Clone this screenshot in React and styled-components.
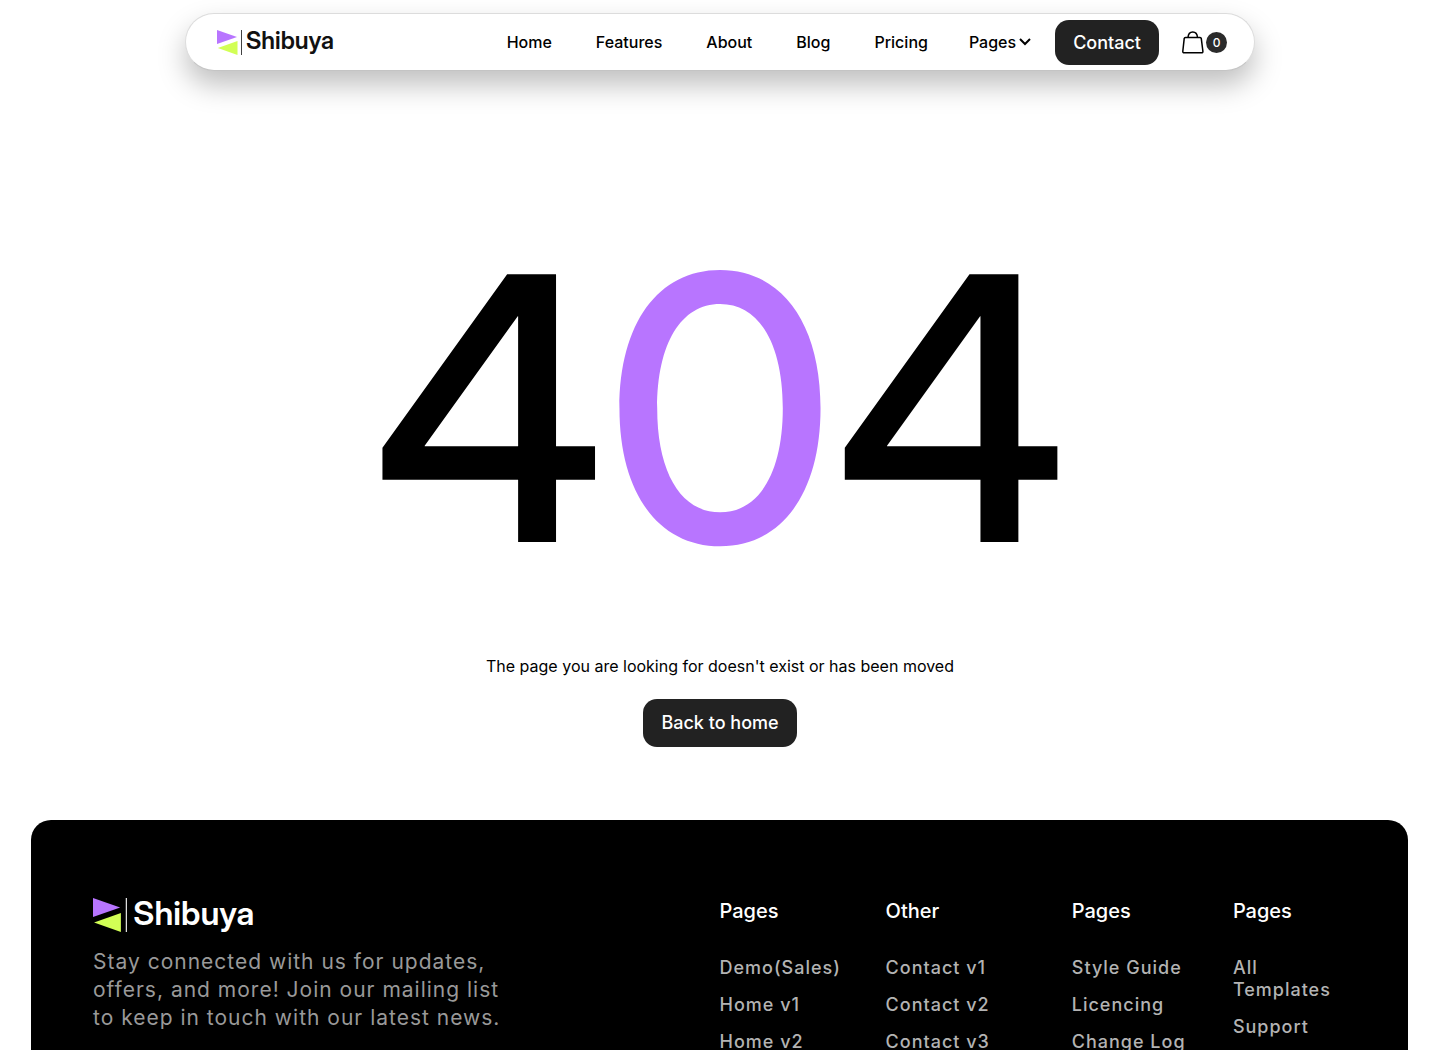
import React from "react";
import styled, { createGlobalStyle } from "styled-components";

const GlobalStyle = createGlobalStyle`
  * {
    box-sizing: border-box;
  }

  body {
    margin: 0;
    background: #fff;
    color: #000;
    font-family: Inter, "Liberation Sans", sans-serif;
    font-size: 16px;
    -webkit-font-smoothing: antialiased;
  }

  h1, h2, p, ul {
    margin: 0;
    padding: 0;
  }

  a {
    color: inherit;
    text-decoration: none;
  }
`;

const Header = styled.header`
  padding: 13px 24px 0;
`;

const Bar = styled.div`
  display: flex;
  align-items: center;
  justify-content: space-between;
  max-width: 1070px;
  height: 58px;
  margin: 0 auto;
  padding: 0 27px 0 31px;
  border: 1px solid #dcdcdc;
  border-bottom-color: #c4c4c4;
  border-radius: 29px;
  background: #fff;
  box-shadow: 0 14px 28px rgba(0, 0, 0, 0.25);
`;

const LogoLink = styled.a`
  display: flex;
  align-items: flex-start;
  width: fit-content;
  gap: ${({ $large }) => ($large ? "5px" : "3px")};
  color: ${({ $large }) => ($large ? "#fff" : "#111")};
  font-family: "Inter Display", Inter, sans-serif;
  font-size: ${({ $large }) => ($large ? "33px" : "24px")};
  line-height: ${({ $large }) => ($large ? "30px" : "22px")};
  font-weight: 600;

  svg {
    display: block;
    width: auto;
    height: ${({ $large }) => ($large ? "34px" : "25px")};
  }
`;

const Nav = styled.nav`
  display: flex;
  align-items: center;
`;

const Menu = styled.ul`
  display: flex;
  align-items: center;
  gap: 44px;
  margin-right: 41px;
  list-style: none;
  font-weight: 500;
  line-height: 20px;
`;

const MenuButton = styled.button`
  display: inline-flex;
  align-items: center;
  gap: 3px;
  margin-right: 24px;
  padding: 0;
  border: 0;
  background: none;
  color: inherit;
  font: inherit;
  font-weight: 500;
  line-height: 20px;
`;

const Button = styled.a`
  display: inline-block;
  padding: ${({ $compact }) => ($compact ? "11px 18px 10px" : "12px 18px")};
  border-radius: 14px;
  background: #222;
  color: #fff;
  font-size: 18px;
  font-weight: 500;
  line-height: 24px;
`;

const CartButton = styled.button`
  display: inline-flex;
  align-items: center;
  gap: 2px;
  margin-left: 22px;
  padding: 0;
  border: 0;
  background: none;
  color: #000;
  font: inherit;
`;

const CartCount = styled.span`
  width: 21px;
  height: 21px;
  border-radius: 50%;
  background: #2b2b2b;
  color: #fff;
  font-size: 12px;
  font-weight: 500;
  line-height: 21px;
  text-align: center;
`;

const Main = styled.main`
  display: flex;
  flex-direction: column;
  align-items: center;
  padding: 153px 24px 73px;
`;

const Code = styled.h1`
  font-family: "Inter Display", Inter, sans-serif;
  font-size: 368px;
  font-weight: 500;
  line-height: 368px;
`;

const Zero = styled.span`
  color: #b875ff;
`;

const Message = styled.p`
  margin: 62px 0 21px;
  line-height: 24px;
  text-align: center;
`;

const Footer = styled.footer`
  display: grid;
  grid-template-columns: 1fr 1fr;
  margin: 0 32px 0 31px;
  padding: 78px 62px;
  border-radius: 20px 20px 0 0;
  background: #000;
`;

const Blurb = styled.p`
  max-width: 420px;
  margin-top: 16px;
  color: #999;
  font-size: 21px;
  letter-spacing: 1px;
  line-height: 28px;
`;

const Columns = styled.div`
  display: grid;
  grid-template-columns: 126fr 146fr 121fr 113fr;
  gap: 40px;
`;

const ColumnTitle = styled.h2`
  margin-bottom: 33px;
  color: #fff;
  font-size: 20px;
  font-weight: 500;
  line-height: 26px;
`;

const LinkList = styled.ul`
  display: grid;
  gap: 15px;
  list-style: none;
  color: #b3b3b3;
  font-size: 18px;
  font-weight: 500;
  letter-spacing: 1px;
  line-height: 22px;
`;

const menuItems = ["Home", "Features", "About", "Blog", "Pricing"];

const footerColumns = [
  { title: "Pages", links: ["Demo(Sales)", "Home v1", "Home v2"] },
  { title: "Other", links: ["Contact v1", "Contact v2", "Contact v3"] },
  { title: "Pages", links: ["Style Guide", "Licencing", "Change Log"] },
  { title: "Pages", links: ["All Templates", "Support"] },
];

function Logo({ large }) {
  return (
    <LogoLink href="#" $large={large}>
      <svg viewBox="0 0 26 25" aria-hidden="true">
        <path d="M0 0L20 7L0 14Z" fill="#b875ff" />
        <path d="M20.500 11V25L.8 18Z" fill="#d2ff55" />
        <path d="M24.500 0V25" stroke="currentColor" strokeWidth="0.800" />
      </svg>
      Shibuya
    </LogoLink>
  );
}

export default function App() {
  return (
    <>
      <GlobalStyle />
      <Header>
        <Bar>
          <Logo />
          <Nav>
            <Menu>
              {menuItems.map((item) => (
                <li key={item}>
                  <a href="#">{item}</a>
                </li>
              ))}
            </Menu>
            <MenuButton type="button">
              Pages
              <svg width="12" height="8" viewBox="0 0 12 8" fill="none" aria-hidden="true">
                <path d="M1 1L6 6L11 1" stroke="currentColor" strokeWidth="2" />
              </svg>
            </MenuButton>
            <Button href="#" $compact>
              Contact
            </Button>
            <CartButton type="button" aria-label="Cart, 0 items">
              <svg width="23" height="24" viewBox="0 0 23 24" fill="none" stroke="currentColor" strokeWidth="1.500" aria-hidden="true">
                <path d="M4.500 7.500H19Q20.200 7.500 20.300 8.700L21.900 21.200Q22 22.800 20.500 22.800H3.300Q1.700 22.800 1.800 21.200L3.200 8.700Q3.300 7.500 4.500 7.500Z" />
                <path d="M7 7.500C7.500 0 16 0 16.500 7.500" />
              </svg>
              <CartCount>0</CartCount>
            </CartButton>
          </Nav>
        </Bar>
      </Header>
      <Main>
        <Code>
          4<Zero>0</Zero>4
        </Code>
        <Message>The page you are looking for doesn't exist or has been moved</Message>
        <Button href="#">Back to home</Button>
      </Main>
      <Footer>
        <div>
          <Logo large />
          <Blurb>
            Stay connected with us for updates, offers, and more! Join our mailing list to keep in touch with our
            latest news.
          </Blurb>
        </div>
        <Columns>
          {footerColumns.map((column, index) => (
            <div key={index}>
              <ColumnTitle>{column.title}</ColumnTitle>
              <LinkList>
                {column.links.map((link) => (
                  <li key={link}>
                    <a href="#">{link}</a>
                  </li>
                ))}
              </LinkList>
            </div>
          ))}
        </Columns>
      </Footer>
    </>
  );
}
